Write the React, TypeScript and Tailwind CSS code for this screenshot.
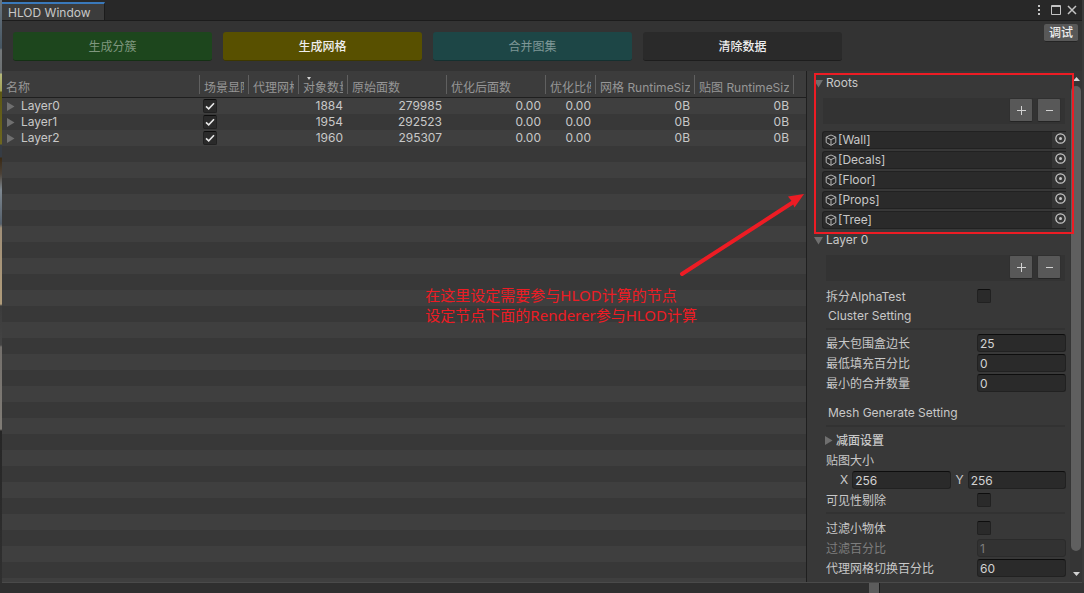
import type { ReactNode } from "react";

const columns = [
  { label: "名称", width: "w-[198px]" },
  { label: "场景显隐", width: "w-[49px]" },
  { label: "代理网格", width: "w-[50px]" },
  { label: "对象数量", width: "w-[49px]", sorted: true },
  { label: "原始面数", width: "w-[99px]" },
  { label: "优化后面数", width: "w-[99px]" },
  { label: "优化比例", width: "w-[50px]" },
  { label: "网格 RuntimeSize", width: "w-[99px]" },
  { label: "贴图 RuntimeSize", width: "w-[99px]" },
];

const layers = [
  { name: "Layer0", objects: 1884, faces: 279985 },
  { name: "Layer1", objects: 1954, faces: 292523 },
  { name: "Layer2", objects: 1960, faces: 295307 },
];

const roots = ["[Wall]", "[Decals]", "[Floor]", "[Props]", "[Tree]"];

const actions = [
  { label: "生成分簇", style: "bg-[#1d461d] text-[#7f977f]", disabled: true },
  { label: "生成网格", style: "bg-[#585000] text-[#eeeeee] font-medium", disabled: false },
  { label: "合并图集", style: "bg-[#1d4646] text-[#7f9797]", disabled: true },
  { label: "清除数据", style: "bg-[#2a2a2a] text-[#eeeeee] font-medium", disabled: false },
];

function Triangle({ open = false }: { open?: boolean }) {
  return (
    <svg viewBox="0 0 9 9" className="size-[9px] shrink-0 fill-[#6f6f6f]" aria-hidden="true">
      <path d={open ? "M0 1h9L4.500 8.500z" : "M1 0v9L8.500 4.500z"} />
    </svg>
  );
}

function Check({ label, checked = false }: { label: string; checked?: boolean }) {
  return (
    <span className="relative block size-[14px]">
      <input
        type="checkbox"
        aria-label={label}
        defaultChecked={checked}
        className="peer block size-[14px] appearance-none rounded-[2px] border border-[#212121] border-t-[#0d0d0d] bg-[#2a2a2a]"
      />
      <svg
        viewBox="0 0 14 14"
        className="pointer-events-none absolute inset-0 hidden size-[14px] fill-none stroke-[#e8e8e8] stroke-[1.6] peer-checked:block"
        aria-hidden="true"
      >
        <path d="M3 7.300L5.700 9.800L11 4.300" />
      </svg>
    </span>
  );
}

function ListToolbar({ inset }: { inset: string }) {
  const button =
    "flex size-6 items-center justify-center rounded-[2px] border border-[#303030] border-b-[#242424] bg-[#585858] text-[#d2d2d2]";
  return (
    <div className={`my-[5px] mr-[5px] flex h-[26px] items-start justify-end gap-1 bg-[#333333] pr-1 ${inset}`}>
      <button type="button" aria-label="Add" className={button}>
        <svg viewBox="0 0 9 9" className="size-[9px] fill-none stroke-current">
          <path d="M0 4.500h9M4.500 0v9" />
        </svg>
      </button>
      <button type="button" aria-label="Remove" className={button}>
        <svg viewBox="0 0 9 9" className="size-[9px] fill-none stroke-current">
          <path d="M1 4.500h7" />
        </svg>
      </button>
    </div>
  );
}

function Foldout({ label }: { label: string }) {
  return (
    <button type="button" className="flex h-5 items-center gap-[3px] pl-[7px] text-left">
      <Triangle open />
      {label}
    </button>
  );
}

const fieldStyle =
  "block h-[18px] w-full min-w-0 rounded-[3px] border border-[#212121] border-t-[#0d0d0d] bg-[#2a2a2a] px-[2px] text-[#d2d2d2] disabled:border-[#2b2b2b] disabled:bg-[#323232] disabled:text-[#7d7d7d]";

function Row({ label, children, muted = false }: { label: string; children: ReactNode; muted?: boolean }) {
  return (
    <label className={`flex h-5 items-center pr-1 pl-[19px] ${muted ? "text-[#7d7d7d]" : ""}`}>
      <span className="min-w-0 flex-1 pt-[2px] whitespace-nowrap">{label}</span>
      <span className="w-[89px] shrink-0">{children}</span>
    </label>
  );
}

function Divider() {
  return <hr className="mt-[2px] mr-[5px] mb-[3px] ml-[19px] border-t-2 border-[#323232]" />;
}

function ObjectRow({ name }: { name: string }) {
  return (
    <div className="flex h-5 items-center pr-1 pl-[15px]">
      <div className="flex h-[18px] w-full items-center rounded-l-[3px] border border-r-0 border-[#212121] bg-[#2a2a2a] pl-[2px]">
        <svg viewBox="0 0 12 12" className="size-3 shrink-0 fill-none stroke-[#b4b4b4]" aria-hidden="true">
          <path d="M6 1L10.800 3v5.500L6 11.300L1.200 8.500V3zM1.200 3.300L6 5.600l4.800-2.300M6 5.600v5.700" />
        </svg>
        <span className="ml-[1px] flex-1">{name}</span>
        <button
          type="button"
          aria-label={`Select ${name}`}
          className="flex h-4 w-[14px] items-start justify-end bg-[#353535] pt-px"
        >
          <svg viewBox="0 0 11 11" className="size-[11px] shrink-0 fill-none stroke-[#c8c8c8]">
            <circle cx="5.500" cy="5.500" r="4.700" strokeWidth="1.200" />
            <circle cx="5.500" cy="5.500" r="1.500" className="fill-[#c8c8c8] stroke-none" />
          </svg>
        </button>
      </div>
    </div>
  );
}

function LayerTable() {
  const num = "p-0 pr-[5px] text-right";
  return (
    <div className="min-w-0 flex-1 overflow-hidden border-r border-[#1f1f1f] bg-[repeating-linear-gradient(#383838_0_16px,#3f3f3f_16px_32px)] bg-[position:0_11px]">
      <table className="w-full table-fixed border-collapse">
        <thead className="bg-[#3c3c3c] text-[#969696]">
          <tr className="h-[27px] shadow-[inset_0_-1px_0_#1f1f1f]">
            {columns.map((c) => (
              <th key={c.label} className={`${c.width} p-0 text-left font-normal`}>
                <div className="relative flex h-[19px] items-start border-r border-[#606060] pr-1 pl-1">
                  <span className="h-[22px] w-full shrink-0 overflow-hidden leading-[26px] whitespace-nowrap">
                    {c.label}
                  </span>
                  {c.sorted && (
                    <svg viewBox="0 0 4 3" className="absolute top-[2px] left-[8px] h-[3px] w-1 fill-[#d2d2d2]">
                      <path d="M0 0h4L2 3z" />
                    </svg>
                  )}
                </div>
              </th>
            ))}
            <th aria-hidden="true" />
          </tr>
        </thead>
        <tbody>
          {layers.map((l) => (
            <tr key={l.name} className="h-4 odd:bg-[#3f3f3f] even:bg-[#383838]">
              <td className="p-0 pl-1">
                <button type="button" className="flex h-4 items-center gap-[6px]">
                  <Triangle />
                  {l.name}
                </button>
              </td>
              <td className="p-0 pl-[3px]">
                <Check label={`${l.name} 场景显隐`} checked />
              </td>
              <td className="p-0" />
              <td className={num}>{l.objects}</td>
              <td className={num}>{l.faces}</td>
              <td className={num}>0.00</td>
              <td className={num}>0.00</td>
              <td className={num}>0B</td>
              <td className={num}>0B</td>
              <td className="p-0" />
            </tr>
          ))}
        </tbody>
      </table>
    </div>
  );
}

function Inspector() {
  return (
    <aside className="relative flex w-[275px] shrink-0 bg-[#383838]">
      <div className="flex min-w-0 flex-1 flex-col pt-[2px] pb-1">
        <Foldout label="Roots" />
        <ListToolbar inset="ml-4" />
        <div className="pt-px">
          {roots.map((r) => (
            <ObjectRow key={r} name={r} />
          ))}
        </div>
        <Foldout label="Layer 0" />
        <ListToolbar inset="ml-[19px]" />
        <Row label="拆分AlphaTest">
          <Check label="拆分AlphaTest" />
        </Row>
        <h2 className="h-5 pl-[21px] leading-5">Cluster Setting</h2>
        <Divider />
        <Row label="最大包围盒边长">
          <input className={fieldStyle} defaultValue="25" />
        </Row>
        <Row label="最低填充百分比">
          <input className={fieldStyle} defaultValue="0" />
        </Row>
        <Row label="最小的合并数量">
          <input className={fieldStyle} defaultValue="0" />
        </Row>
        <h2 className="mt-[10px] h-5 pl-[21px] leading-5">Mesh Generate Setting</h2>
        <Divider />
        <button type="button" className="flex h-5 items-center gap-[3px] pl-[17px] font-medium">
          <Triangle />
          <span className="pt-[2px]">减面设置</span>
        </button>
        <div className="h-5 pt-px pl-[19px] leading-5">贴图大小</div>
        <div className="flex h-5 items-center gap-[5px] pr-1 pl-[33px]">
          <label className="flex flex-1 items-center gap-1">
            X
            <input className={fieldStyle} defaultValue="256" />
          </label>
          <label className="flex flex-1 items-center gap-1">
            Y
            <input className={fieldStyle} defaultValue="256" />
          </label>
        </div>
        <Row label="可见性剔除">
          <Check label="可见性剔除" />
        </Row>
        <Divider />
        <div className="pt-px">
          <Row label="过滤小物体">
            <Check label="过滤小物体" />
          </Row>
          <Row label="过滤百分比" muted>
            <input className={fieldStyle} defaultValue="1" disabled />
          </Row>
          <Row label="代理网格切换百分比">
            <input className={fieldStyle} defaultValue="60" />
          </Row>
        </div>
      </div>
      <div className="flex w-3 shrink-0 flex-col items-center gap-[5px] bg-[#353535] pt-[6px] pb-[6px]">
        <svg viewBox="0 0 7 4" className="h-1 w-[7px] fill-[#d2d2d2]" aria-hidden="true">
          <path d="M0 4h7L3.500 0z" />
        </svg>
        <div className="mb-4 w-[10px] flex-1 rounded-full bg-[#5f5f5f]" />
        <svg viewBox="0 0 7 4" className="h-1 w-[7px] fill-[#d2d2d2]" aria-hidden="true">
          <path d="M0 0h7L3.500 4z" />
        </svg>
      </div>
      <div className="pointer-events-none absolute top-[2px] left-[7px] h-[161px] w-[260px] border-2 border-[#ed1c24]" />
    </aside>
  );
}

export default function App() {
  return (
    <div className="flex min-h-screen flex-col bg-[#2f2f2f] font-['Inter','Noto_Sans_CJK_SC',sans-serif] text-[12px] leading-4 text-[#c8c8c8]">
      <div className="flex">
        <div className="w-[2px] shrink-0 bg-[linear-gradient(#6b7680_0,#465663_48px,#74787a_50px,#6c7072_73px,#b5b87c_74px,#a3a255_91px,#5c5714_92px,#6e6720_144px,#363c44_145px,#363c44_157px,#3a2a14_158px,#4c4238_174px,#7d8790_190px,#55606c_224px,#a08f78_228px,#b09c7a_304px,#3c3c3c_306px,#444444_345px,#74706c_347px,#807c76_429px,#262626_431px,#303030_100%)]" />
        <main className="relative min-w-0 flex-1 border-b border-[#4a4a4a] bg-[#333333]">
          <header className="flex h-[21px] justify-between border-b border-[#1c1c1c] bg-[#282828]">
            <h1 className="mt-[2px] flex h-[18px] w-[103px] items-center border-t-2 border-r border-t-[#3a79bb] border-r-[#1c1c1c] bg-[#3c3c3c] pt-px pl-[6px] font-normal whitespace-nowrap">
              HLOD Window
            </h1>
            <div className="flex items-center gap-[6px] pr-[5px] text-[#c4c4c4]">
              <button type="button" aria-label="Menu">
                <svg viewBox="0 0 10 12" className="h-3 w-[10px] fill-current">
                  <path d="M3 1h2v2H3zM3 5h2v2H3zM3 9h2v2H3z" />
                </svg>
              </button>
              <button type="button" aria-label="Maximize">
                <svg viewBox="0 0 10 10" className="size-[10px] fill-none stroke-current">
                  <path d="M.5 .5h9v9h-9zM0 1.500h10" />
                </svg>
              </button>
              <button type="button" aria-label="Close">
                <svg viewBox="0 0 10 10" className="size-[10px] fill-none stroke-current stroke-[1.5]">
                  <path d="M1 1l8 8M9 1l-8 8" />
                </svg>
              </button>
            </div>
          </header>

          <div className="flex h-[50px] items-start justify-between pr-1 pl-[11px]">
            <div className="flex gap-[11px] pt-[11px]">
              {actions.map((a) => (
                <button
                  key={a.label}
                  type="button"
                  disabled={a.disabled}
                  className={`h-[29px] w-[199px] rounded-[3px] border-b border-black/30 pt-[2px] ${a.style}`}
                >
                  {a.label}
                </button>
              ))}
            </div>
            <button
              type="button"
              className="mt-[3px] h-[18px] w-[34px] rounded-[2px] border-b border-[#242424] bg-[#585858] font-medium text-[#eeeeee]"
            >
              调试
            </button>
          </div>

          <div className="flex">
            <LayerTable />
            <Inspector />
          </div>

          <div className="pointer-events-none absolute top-[285px] right-[385px] font-['Noto_Sans','Noto_Sans_CJK_SC',sans-serif] text-[15px] leading-5 whitespace-nowrap text-[#ed1c24]">
            <p>在这里设定需要参与HLOD计算的节点</p>
            <p>设定节点下面的Renderer参与HLOD计算</p>
          </div>
          <svg
            viewBox="0 0 126 84"
            className="pointer-events-none absolute top-[192px] right-[277px] h-[84px] w-[126px] fill-[#ed1c24] stroke-[#ed1c24]"
            aria-hidden="true"
          >
            <path d="M3 82L116 9" strokeWidth="4" strokeLinecap="round" />
            <path d="M125 2L109 4.500L113 9.500L115.500 15.500z" stroke="none" />
          </svg>
        </main>
        <div className="w-[2px] shrink-0 bg-[#3a3a3a]" />
      </div>
      <div className="flex min-h-[10px] flex-1 justify-end">
        <div className="w-[11px] border-r border-[#1c1c1c] bg-[#5c5c5c]" />
        <div className="w-[204px] bg-[#343434]" />
      </div>
    </div>
  );
}
